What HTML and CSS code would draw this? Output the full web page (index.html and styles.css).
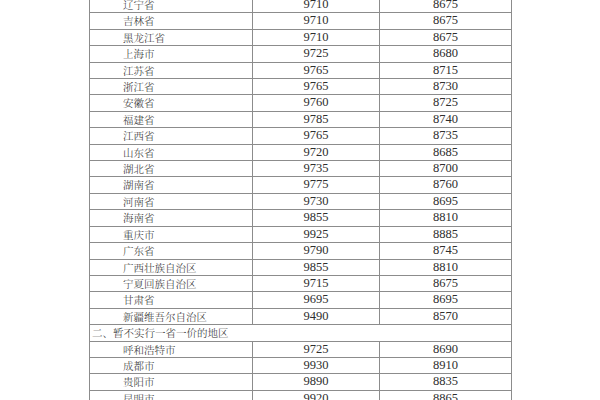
FILE: index.html
```html
<!DOCTYPE html>
<html lang="zh-CN">
<head>
<meta charset="utf-8">
<title>价格表</title>
<link rel="stylesheet" href="styles.css">
</head>
<body>
<div class="page">
<table class="price-table">
<colgroup><col class="c-name"><col class="c-a"><col class="c-b"></colgroup>
<tbody>
<tr><td class="name">辽宁省</td><td class="num">9710</td><td class="num">8675</td></tr>
<tr><td class="name">吉林省</td><td class="num">9710</td><td class="num">8675</td></tr>
<tr><td class="name">黑龙江省</td><td class="num">9710</td><td class="num">8675</td></tr>
<tr><td class="name">上海市</td><td class="num">9725</td><td class="num">8680</td></tr>
<tr><td class="name">江苏省</td><td class="num">9765</td><td class="num">8715</td></tr>
<tr><td class="name">浙江省</td><td class="num">9765</td><td class="num">8730</td></tr>
<tr><td class="name">安徽省</td><td class="num">9760</td><td class="num">8725</td></tr>
<tr><td class="name">福建省</td><td class="num">9785</td><td class="num">8740</td></tr>
<tr><td class="name">江西省</td><td class="num">9765</td><td class="num">8735</td></tr>
<tr><td class="name">山东省</td><td class="num">9720</td><td class="num">8685</td></tr>
<tr><td class="name">湖北省</td><td class="num">9735</td><td class="num">8700</td></tr>
<tr><td class="name">湖南省</td><td class="num">9775</td><td class="num">8760</td></tr>
<tr><td class="name">河南省</td><td class="num">9730</td><td class="num">8695</td></tr>
<tr><td class="name">海南省</td><td class="num">9855</td><td class="num">8810</td></tr>
<tr><td class="name">重庆市</td><td class="num">9925</td><td class="num">8885</td></tr>
<tr><td class="name">广东省</td><td class="num">9790</td><td class="num">8745</td></tr>
<tr><td class="name">广西壮族自治区</td><td class="num">9855</td><td class="num">8810</td></tr>
<tr><td class="name">宁夏回族自治区</td><td class="num">9715</td><td class="num">8675</td></tr>
<tr><td class="name">甘肃省</td><td class="num">9695</td><td class="num">8695</td></tr>
<tr><td class="name">新疆维吾尔自治区</td><td class="num">9490</td><td class="num">8570</td></tr>
<tr><td class="section" colspan="3">二、暂不实行一省一价的地区</td></tr>
<tr><td class="name">呼和浩特市</td><td class="num">9725</td><td class="num">8690</td></tr>
<tr><td class="name">成都市</td><td class="num">9930</td><td class="num">8910</td></tr>
<tr><td class="name">贵阳市</td><td class="num">9890</td><td class="num">8835</td></tr>
<tr><td class="name">昆明市</td><td class="num">9920</td><td class="num">8865</td></tr>
</tbody>
</table>
</div>
</body>
</html>
```
FILE: styles.css
```css
html, body {
  margin: 0;
  padding: 0;
  background: #ffffff;
}
.page {
  width: 600px;
  height: 400px;
  overflow: hidden;
}
.price-table {
  margin: -4px 0 0 89px;
  border-collapse: collapse;
  table-layout: fixed;
  width: 422px;
  color: #2e2e2e;
}
.c-name { width: 163px; }
.c-a { width: 127px; }
.c-b { width: 132px; }
.price-table td {
  border: 1px solid #8c8c8c;
  height: 15.4px;
  padding: 0;
  line-height: 15.4px;
  white-space: nowrap;
  overflow: visible;
}
.name {
  padding-left: 33px !important;
  font-family: "Noto Serif CJK SC", "Noto Sans CJK SC", sans-serif;
  font-size: 10.5px;
  font-weight: 300;
}
.section {
  padding-left: 2px !important;
  font-family: "Noto Serif CJK SC", "Noto Sans CJK SC", sans-serif;
  font-size: 10.5px;
  font-weight: 300;
}
.num {
  text-align: center;
  font-family: "Liberation Serif", serif;
  font-size: 12.5px;
}
```
